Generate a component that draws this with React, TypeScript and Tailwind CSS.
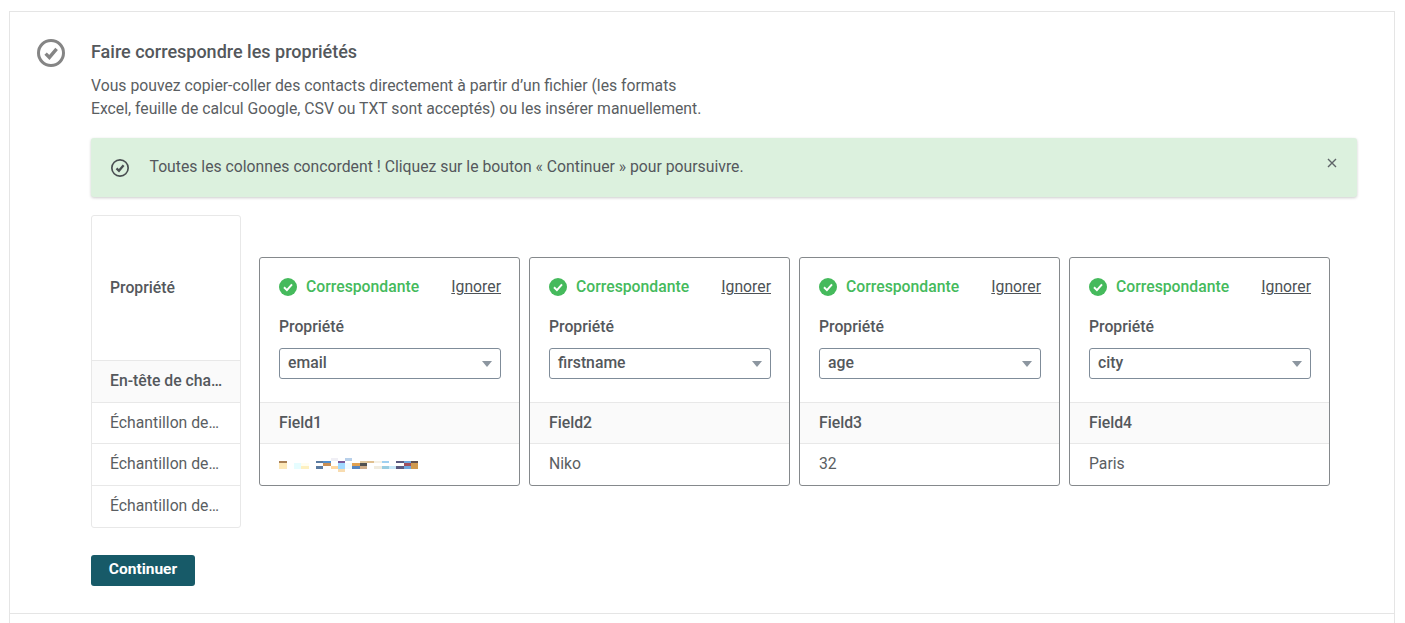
const cells: [number, number, number, number, string][] = [
  [27,33,24,6,"#a87f55"],[27,39,24,18,"#fde8b8"],[72,39,21,18,"#e6fdff"],[93,39,24,9,"#fffdf0"],[93,48,24,9,"#fdf0c0"],
  [138,33,21,6,"#5a7aa0"],[159,33,24,6,"#5090d0"],[159,39,24,9,"#c98f55"],[138,48,21,9,"#5a7aa0"],
  [183,24,21,9,"#f0eff5"],[204,33,21,6,"#7a5a9a"],[225,24,21,9,"#b8d0ea"],[204,39,21,18,"#a0d8ff"],[183,48,21,9,"#ffd8a0"],[204,57,21,9,"#f8dcb0"],[225,39,21,18,"#f0faff"],
  [246,39,24,9,"#e0a050"],[246,48,24,9,"#5585c0"],[270,33,21,6,"#e0c8a0"],[270,39,21,9,"#505050"],[270,48,21,9,"#ccaa88"],[291,33,21,6,"#e0c090"],
  [312,33,24,6,"#f5f0e5"],[312,48,24,9,"#f0ece0"],[336,33,21,6,"#a0d0f0"],[336,48,21,9,"#98cce0"],[357,48,21,9,"#c8e8f8"],
  [378,33,24,6,"#5a5a80"],[378,48,24,9,"#5a5a80"],[402,33,21,6,"#70a8e0"],[402,39,21,9,"#a05060"],[402,48,21,9,"#70a8e0"],[423,33,21,6,"#605050"],[423,39,21,18,"#d09a50"],
];

function Blot() {
  return (
    <svg width="139" height="14" viewBox="27 24 417 42" shapeRendering="crispEdges" className="block mt-[3px]">
      {cells.map(([x, y, w, h, c], i) => <rect key={i} x={x} y={y} width={w} height={h} fill={c} />)}
    </svg>
  );
}

function CircleCheck({ size, stroke, color, sw }: { size: number; stroke: number; color: string; sw: number }) {
  return (
    <svg width={size} height={size} viewBox="0 0 28 28" fill="none" className="block shrink-0">
      <circle cx="14" cy="14" r={14 - stroke / 2} stroke={color} strokeWidth={stroke} />
      <path d="M8.6 14.6 L12.4 18.4 L19.6 9.8" stroke={color} strokeWidth={sw} />
    </svg>
  );
}

function Card({ prop, field, children }: { prop: string; field: string; children: React.ReactNode }) {
  return (
    <div className="w-[261px] h-[229px] border border-[#85898c] rounded-[3px] bg-white flex flex-col">
      <div className="h-[145px] pl-[19px] pr-[18px] pt-[20px] border-b border-[#e8e8e8]">
        <div className="flex items-center h-[18px]">
          <svg width="18" height="18" viewBox="0 0 18 18" className="block shrink-0">
            <circle cx="9" cy="9" r="9" fill="#45ba5c" />
            <path d="M5 9.3 L7.9 12.1 L13 6.4" fill="none" stroke="#fff" strokeWidth="2" />
          </svg>
          <span className="ml-[9px] text-[15.75px] font-medium text-[#45ba5c]">Correspondante</span>
          <span className="ml-auto text-[#4d5256] underline text-[15.75px]">Ignorer</span>
        </div>
        <div className="mt-[20px] h-[22px] leading-[22px] text-[15.75px] font-medium text-[#54585c]">Propriété</div>
        <div className="mt-[10px] h-[31px] w-[222px] border border-[#7f8c99] rounded-[3px] flex items-center pl-[8px] pr-[8px] pb-[2px] text-[15.75px] font-medium text-[#54585c]">
          <span>{prop}</span>
          <span className="ml-auto mt-[2px] w-0 h-0 border-x-[5px] border-x-transparent border-t-[6px] border-t-[#8c96a0]" />
        </div>
      </div>
      <div className="h-[41px] flex items-center px-[19px] bg-[#fafafa] border-b border-[#e8e8e8] text-[15.75px] font-medium text-[#54585c]">{field}</div>
      <div className="flex-1 flex items-center px-[19px] pb-[2px] text-[15.75px] text-[#5a5e62]">{children}</div>
    </div>
  );
}

const rowBase = "flex items-center pl-[18px] border-t border-[#e8e8e8] text-[15.75px] whitespace-nowrap";

export default function App() {
  return (
    <div className="h-[623px] overflow-hidden bg-white pt-[11px] font-['Roboto',sans-serif]">
      <div className="ml-[9px] w-[1386px] h-[612px] border-x border-[#e5e5e5]">
        <section className="h-[603px] border-y border-[#e5e5e5] pl-[27px] pt-[27px] flex">
          <CircleCheck size={28} stroke={3} color="#858585" sw={3.4} />
          <div className="ml-[26px] w-[1266px]">
            <h2 className="mt-[1px] text-[18px] leading-[24px] font-medium text-[#54585c]">Faire correspondre les propriétés</h2>
            <p className="mt-[10px] text-[15.75px] leading-[23px] text-[#5a5e62]">
              Vous pouvez copier-coller des contacts directement à partir d’un fichier (les formats<br />
              Excel, feuille de calcul Google, CSV ou TXT sont acceptés) ou les insérer manuellement.
            </p>
            <div className="mt-[18px] h-[59px] rounded-[3px] bg-[#dcf1de] shadow-[0_1px_3px_rgba(0,0,0,0.2)] flex items-center pl-[20px] pr-[20px] text-[15.75px] text-[#54585c]">
              <CircleCheck size={18} stroke={2.6} color="#4a4f52" sw={3.6} />
              <span className="ml-[20.5px] mb-[2px]">Toutes les colonnes concordent ! Cliquez sur le bouton « Continuer » pour poursuivre.</span>
              <svg width="10" height="10" viewBox="0 0 10 10" className="ml-auto mb-[9px] block">
                <path d="M1 1 L9 9 M9 1 L1 9" stroke="#5f6468" strokeWidth="1.4" />
              </svg>
            </div>
            <div className="mt-[18px] flex items-start">
              <div className="w-[150px] h-[313px] border border-[#e8e8e8] rounded-[3px] flex flex-col overflow-hidden">
                <div className="h-[144px] shrink-0 flex items-center pl-[18px] text-[15.75px] font-medium text-[#54585c]">Propriété</div>
                <div className={`${rowBase} h-[42px] pb-[2px] bg-[#fafafa] font-medium text-[#54585c]`}>En-tête de cha…</div>
                <div className={`${rowBase} h-[41px] text-[#5a5e62]`}>Échantillon de…</div>
                <div className={`${rowBase} h-[42px] pb-[2px] text-[#5a5e62]`}>Échantillon de…</div>
                <div className={`${rowBase} flex-1 pb-[2px] text-[#5a5e62]`}>Échantillon de…</div>
              </div>
              <div className="ml-[18px] mt-[42px] flex gap-[9px]">
                <Card prop="email" field="Field1"><Blot /></Card>
                <Card prop="firstname" field="Field2">Niko</Card>
                <Card prop="age" field="Field3">32</Card>
                <Card prop="city" field="Field4">Paris</Card>
              </div>
            </div>
            <button className="mt-[27px] block w-[104px] h-[31px] pb-[2px] rounded-[3px] bg-[#175a68] text-white text-[15.5px] font-bold">Continuer</button>
          </div>
        </section>
      </div>
    </div>
  );
}
